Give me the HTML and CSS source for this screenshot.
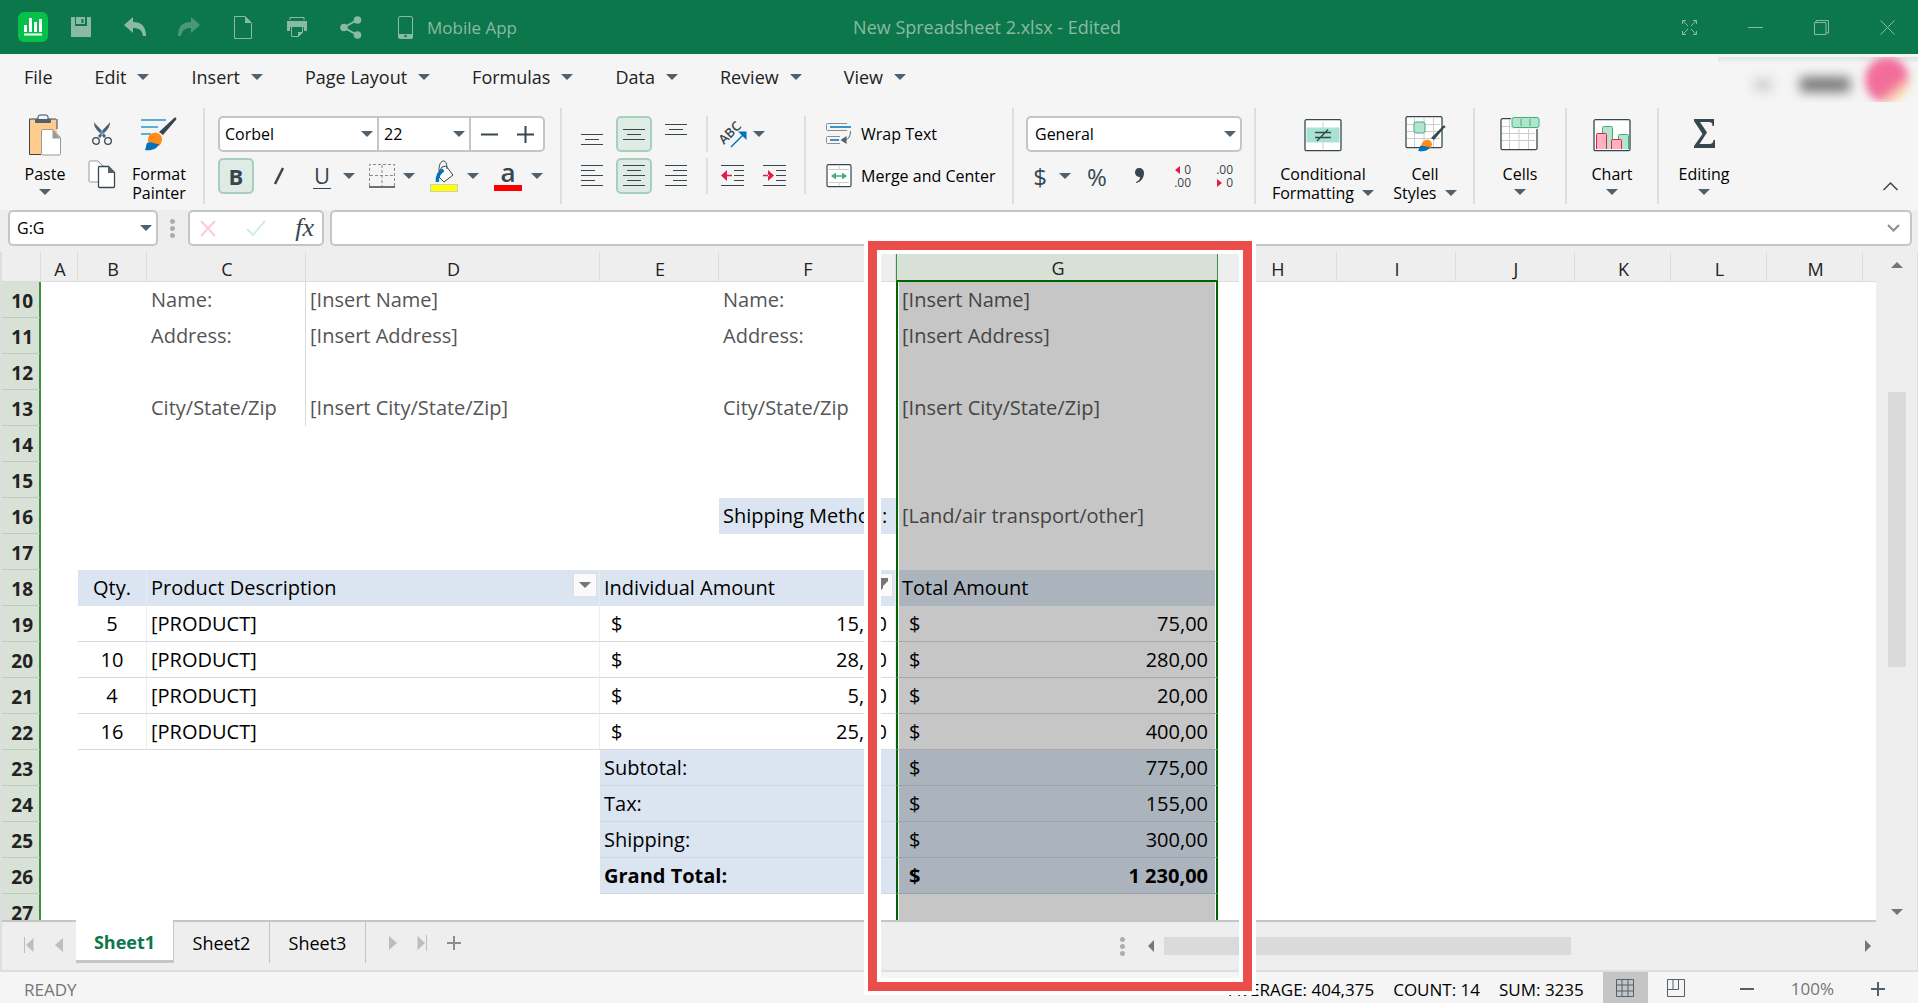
FILE: index.html
```html
<!DOCTYPE html>
<html lang="en">
<head>
    <meta charset="UTF-8">
    <meta name="viewport" content="width=device-width, initial-scale=1.0">
    <title>New Spreadsheet 2.xlsx - Edited</title>
    <link rel="stylesheet" href="styles.css">
</head>
<body>
    <header class="titlebar">
        <div class="quick">
            <svg class="logo" width="30" height="30" viewBox="0 0 30 30"><rect width="30" height="30" rx="6" fill="#05c04b"/><path d="M6 13h3v7H6zM11 6h3v14h-3zM16 10h3v10h-3zM21 7h3v13h-3zM6 21.500h18v2H6z" fill="#fff"/></svg>
            <button aria-label="Save"><svg width="20" height="20" viewBox="0 0 20 20"><path d="M0 0h4v9h12V0h4v20H0zM5 0h9v7H5zM10.500 2v4h2V2z" fill="currentColor" fill-rule="evenodd"/></svg></button>
            <button aria-label="Undo"><svg width="22" height="20" viewBox="0 0 22 20"><path d="M9 0v5c8 0 13 4 13 14h-3c-1-6-4-8-10-8v5L0 8z" fill="currentColor"/></svg></button>
            <button class="dim" aria-label="Redo"><svg width="22" height="20" viewBox="0 0 22 20"><path d="M13 0v5C5 5 0 9 0 19h3c1-6 4-8 10-8v5l9-8z" fill="currentColor"/></svg></button>
            <button aria-label="New"><svg width="18" height="23" viewBox="0 0 18 23"><path d="M.500.500H11l6.500 7v15H.500z" fill="none" stroke="currentColor"/><path d="M11 0v7h7z" fill="currentColor"/></svg></button>
            <button aria-label="Print"><svg width="20" height="20" viewBox="0 0 20 20"><path d="M3 3V.500h14V3" fill="none" stroke="currentColor"/><path d="M0 4h20v10h-3v-4H3v4H0z" fill="currentColor"/><path d="M4.500 9.500h11v6l-4 4h-7z" fill="none" stroke="currentColor"/><path d="M11 20v-5h5z" fill="currentColor"/></svg></button>
            <button aria-label="Share"><svg width="22" height="23" viewBox="0 0 22 23"><path d="M17 4 4 11.500 17 19" fill="none" stroke="currentColor" stroke-width="2"/><circle cx="17.500" cy="4" r="3.800" fill="currentColor"/><circle cx="4" cy="11.500" r="3.800" fill="currentColor"/><circle cx="17.500" cy="19" r="3.800" fill="currentColor"/></svg></button>
            <button class="mobile"><svg width="15" height="23" viewBox="0 0 15 23"><rect x=".5" y=".5" width="14" height="22" rx="1.500" fill="none" stroke="currentColor"/><path d="M0 18h15v4H0z" fill="currentColor"/><circle cx="7.500" cy="20" r="1.200" fill="#0c774b"/></svg>Mobile App</button>
        </div>
        <h1>New Spreadsheet 2.xlsx - Edited</h1>
        <div class="window-buttons">
            <button aria-label="Full screen"><svg width="15" height="15" viewBox="0 0 15 15"><path d="M.500 4V.500H4M.500.500 6 6M11 .500h3.500V4M14.500.500 9 6M.500 11v3.500H4M.500 14.500 6 9M11 14.500h3.500V11M14.500 14.500 9 9" fill="none" stroke="currentColor"/></svg></button>
            <button aria-label="Minimize"><svg width="15" height="15" viewBox="0 0 15 15"><path d="M0 7.500h15" stroke="currentColor"/></svg></button>
            <button aria-label="Restore"><svg width="15" height="15" viewBox="0 0 15 15"><path d="M.500 2.500h11.500v12H.500zM2 2V.500h12.500V13H12" fill="none" stroke="currentColor"/></svg></button>
            <button aria-label="Close"><svg width="15" height="15" viewBox="0 0 15 15"><path d="m.500.500 14 14m0-14-14 14" stroke="currentColor"/></svg></button>
        </div>
    </header>

    <nav class="menu">
        <button>File</button>
        <button>Edit <i class="caret"></i></button>
        <button>Insert <i class="caret"></i></button>
        <button>Page Layout <i class="caret"></i></button>
        <button>Formulas <i class="caret"></i></button>
        <button>Data <i class="caret"></i></button>
        <button>Review <i class="caret"></i></button>
        <button>View <i class="caret"></i></button>
        <div class="account"><span class="dot"></span><span class="user"></span><span class="avatar"></span></div>
    </nav>

    <section class="ribbon">
        <button class="big paste">
            <svg width="34" height="42" viewBox="0 0 34 42"><rect x="1" y="5" width="28" height="36" rx="1" fill="#ffcc8e"/><path d="M28 5H1.500v35.500H13" fill="none" stroke="#37474f"/><path d="M29 5v10" stroke="#37474f"/><rect x="10" y="1" width="10" height="6" rx="2" fill="#f5f5f5" stroke="#37474f"/><rect x="7" y="5" width="16" height="4" rx="1" fill="#50616d"/><path d="M15 15.500h10l7.500 8v16a1.500 1.500 0 0 1-1.500 1.500H15a1.500 1.500 0 0 1-1.500-1.500V17a1.500 1.500 0 0 1 1.500-1.500z" fill="#fff" stroke="#999"/><path d="M24.500 15.500v9h8z" fill="#999"/></svg>
            <span>Paste</span>
            <i class="caret"></i>
        </button>
        <div class="stack">
            <button aria-label="Cut"><svg width="20" height="25" viewBox="0 0 20 25"><path d="M2 1c0 5 2 7 5 10l5 6 2-2-4-5C7 6 3 3 2 1zM18 1c0 5-2 7-5 10l-5 6-2-2 4-5c3-4 7-7 8-9z" fill="#50616d"/><circle cx="10" cy="12" r="1.500" fill="#1e9ad6"/><circle cx="4" cy="20" r="3.300" fill="none" stroke="#37474f" stroke-width="1.300"/><circle cx="16" cy="20" r="3.300" fill="none" stroke="#37474f" stroke-width="1.300"/></svg></button>
            <button aria-label="Copy"><svg width="28" height="29" viewBox="0 0 28 29"><path d="M2 1h8l6 6v15H2a1 1 0 0 1-1-1V2a1 1 0 0 1 1-1z" fill="#fff" stroke="#999"/><path d="M9 1l7 6v-1z" fill="#999"/><path d="M11.500 6.500h9l6 6v14a1 1 0 0 1-1 1h-14a1 1 0 0 1-1-1v-19a1 1 0 0 1 1-1z" fill="#fff" stroke="#37474f" stroke-width="1.300"/><path d="M20 6.500V13h6.500z" fill="#50616d"/></svg></button>
        </div>
        <button class="big painter">
            <svg width="36" height="36" viewBox="0 0 36 36"><path d="M0 3h25M0 10h17M0 17h10" stroke="#1e9ad6" stroke-width="1.300"/><path d="M35 1c1 1 0 2-1 3L22 18l-4-3L32 2c1-1 2-2 3-1z" fill="#37474f"/><path d="M10 17c5-3 11 0 11 5 0 3-1 5-3 7L7 25c0-4 0-6 3-8z" fill="#ff8c1a"/><path d="M6 26c4-2 6 1 12 1-2 5-7 7-14 6 1-2 1-5 2-7z" fill="#0071bc"/></svg>
            <span>Format<br>Painter</span>
        </button>

        <div class="sep"></div>

        <div class="group font-group">
            <div class="font-box">
                <div class="combo family"><select aria-label="Font"><option>Corbel</option></select><i class="caret"></i></div>
                <div class="combo size"><select aria-label="Font size"><option>22</option></select><i class="caret"></i></div>
                <button aria-label="Decrease size"><svg width="17" height="17" viewBox="0 0 17 17"><path d="M0 8.500h17" stroke="currentColor" stroke-width="2"/></svg></button>
                <button aria-label="Increase size"><svg width="17" height="17" viewBox="0 0 17 17"><path d="M0 8.500h17M8.500 0v17" stroke="currentColor" stroke-width="2"/></svg></button>
            </div>
            <div class="row font-row">
                <button class="tool on bold" aria-label="Bold">B</button>
                <button class="tool" aria-label="Italic"><svg width="12" height="18" viewBox="0 0 12 18"><path d="M2 17 10 1" stroke="currentColor" stroke-width="2.500"/></svg></button>
                <button class="tool underline" aria-label="Underline"><span>U</span></button><i class="caret"></i>
                <button class="tool" aria-label="Borders"><svg width="26" height="24" viewBox="0 0 26 24"><path d="M.500 22V.500h25V22M13 1v21M1 11.500h24" fill="none" stroke="#8c8c8c" stroke-dasharray="3 2"/><path d="M0 23h26" stroke="#37474f" stroke-width="1.500"/></svg></button><i class="caret"></i>
                <button class="tool wide" aria-label="Fill color"><svg width="28" height="32" viewBox="0 0 28 32"><path d="M12 7 7 15l7 7 9-7-7-9z" fill="#fff" stroke="#37474f"/><path d="M9 11c0-7 2-10 4.500-10S17 4 17 9" fill="none" stroke="#37474f"/><path d="M7.500 22c-1-5 2-10 6-12" fill="none" stroke="#0071bc" stroke-width="3.500"/><rect x=".5" y="24.500" width="27" height="7" fill="#ff0" stroke="#ccc"/></svg></button><i class="caret"></i>
                <button class="tool wide text-color" aria-label="Font color"><span>a</span></button><i class="caret"></i>
            </div>
        </div>

        <div class="sep"></div>

        <div class="group">
            <div class="row">
                <button class="tool" aria-label="Bottom align"><svg width="22" height="22" viewBox="0 0 22 22"><path d="M0 11.500h22M4 16.500h14M0 21.500h22" stroke="currentColor"/></svg></button>
                <button class="tool on" aria-label="Middle align"><svg width="22" height="22" viewBox="0 0 22 22"><path d="M0 6.500h22M4 11.500h14M0 16.500h22" stroke="currentColor"/></svg></button>
                <button class="tool" aria-label="Top align"><svg width="22" height="22" viewBox="0 0 22 22"><path d="M0 1.500h22M4 6.500h14M0 11.500h22" stroke="currentColor"/></svg></button>
                <div class="short-sep"></div>
                <button class="tool" aria-label="Orientation"><svg width="32" height="30" viewBox="0 0 32 30"><text x="8" y="26" class="abc" transform="rotate(-45 8 26)">ABC</text><path d="M15 28 28 15" stroke="#0071bc" stroke-width="1.500"/><path d="M22 12.500h8.500V21z" fill="#0071bc"/></svg></button><i class="caret"></i>
            </div>
            <div class="row">
                <button class="tool" aria-label="Align left"><svg width="22" height="22" viewBox="0 0 22 22"><path d="M0 .500h22M0 5.500h14M0 10.500h22M0 15.500h14M0 20.500h22" stroke="currentColor"/></svg></button>
                <button class="tool on" aria-label="Center"><svg width="22" height="22" viewBox="0 0 22 22"><path d="M0 .500h22M4 5.500h14M0 10.500h22M4 15.500h14M0 20.500h22" stroke="currentColor"/></svg></button>
                <button class="tool" aria-label="Align right"><svg width="22" height="22" viewBox="0 0 22 22"><path d="M0 .500h22M8 5.500h14M0 10.500h22M8 15.500h14M0 20.500h22" stroke="currentColor"/></svg></button>
                <div class="short-sep"></div>
                <button class="tool" aria-label="Decrease indent"><svg width="23" height="22" viewBox="0 0 23 22"><path d="M0 .500h23M13 5.500h10M13 10.500h10M13 15.500h10M0 20.500h23" stroke="currentColor"/><path d="M0 10.500 6 5v11zM5 9.800h6v1.500H5z" fill="#e11d48"/></svg></button>
                <button class="tool" aria-label="Increase indent"><svg width="23" height="22" viewBox="0 0 23 22"><path d="M0 .500h23M13 5.500h10M13 10.500h10M13 15.500h10M0 20.500h23" stroke="currentColor"/><path d="M11 10.500 5 5v11zM0 9.800h6v1.500H0z" fill="#e11d48"/></svg></button>
            </div>
        </div>

        <div class="mid-sep"></div>

        <div class="group text-group">
            <button class="text-tool"><svg width="26" height="24" viewBox="0 0 26 24"><path d="M21 1.500H1.500a1 1 0 0 0-1 1v5a1 1 0 0 0 1 1H21M14 14.500H1.500a1 1 0 0 0-1 1v5a1 1 0 0 0 1 1H14" fill="none" stroke="#8c8c8c"/><path d="M4 5h21M4 18h9" stroke="#0071bc" stroke-width="1.300"/><path d="M24.500 9c0 5-2 8-5 9" fill="none" stroke="#50616d"/><path d="m14.500 18 6-4v8z" fill="#50616d"/></svg>Wrap Text</button>
            <button class="text-tool"><svg width="26" height="24" viewBox="0 0 26 24"><rect x="1" y=".7" width="24" height="22" rx="1.500" fill="#fff" stroke="#37474f" stroke-width="1.200"/><path d="M3 5.500h20M3 18.500h20M13 2v3M13 18v4" stroke="#ccc"/><path d="M7 12h12" stroke="#3cb07c" stroke-width="1.500"/><path d="m5 12 5-3.500v7zM21 12l-5-3.500v7z" fill="#3cb07c"/></svg>Merge and Center</button>
        </div>

        <div class="sep"></div>

        <div class="group number-group">
            <div class="combo number-format"><select aria-label="Number format"><option>General</option></select><i class="caret"></i></div>
            <div class="row number-row">
                <button class="dollar">$</button><i class="caret"></i>
                <button class="percent">%</button>
                <button aria-label="Comma style"><svg width="10" height="16" viewBox="0 0 10 16"><path d="M5 0c3 0 5 2 5 5 0 5-3 9-8 10v-1c3-1 4-3 4-5C3 9 1 7 1 4.500S2.500 0 5 0z" fill="#37474f"/></svg></button>
                <button class="decimals" aria-label="Increase decimals">
                    <span><i class="tri back"></i>0</span><span>.00</span>
                </button>
                <button class="decimals" aria-label="Decrease decimals">
                    <span>.00</span><span><i class="tri"></i>0</span>
                </button>
            </div>
        </div>

        <div class="sep"></div>

        <button class="big conditional">
            <svg width="38" height="42" viewBox="0 0 38 42"><rect x="1" y="5.700" width="36" height="31" rx="1.500" fill="#fff" stroke="#37474f" stroke-width="1.300"/><path d="M2.500 13.500h33v15h-33z" fill="#a9e2d0"/><path d="M19 8v6M19 29v6" stroke="#ccc"/><path d="M11 18.500h16M11 23.500h16M24 15.500 13 27" stroke="#37474f" stroke-width="1.300"/></svg>
            <span>Conditional<br>Formatting <i class="caret"></i></span>
        </button>
        <button class="big styles">
            <svg width="40" height="42" viewBox="0 0 40 42"><rect x="1" y="2.700" width="36" height="31" rx="1.500" fill="#fff" stroke="#37474f" stroke-width="1.300"/><path d="M2 10.500h33M2 17.500h33M2 24.500h33M9.500 4v29M19 4v29M28.500 4v29" stroke="#ccc"/><rect x="9" y="8" width="11" height="11" rx="2" fill="#b2e5cd" stroke="#3cb07c"/><path d="M40 12c1 1 0 2-1 2L29 26l-3-2L37 13c1-1 2-2 3-1z" fill="#37474f"/><path d="M17 29c2-4 9-5 10 1 0 2-1 3-2 5l-9-2z" fill="#ff8c1a"/><path d="M15 32c4-1 5 1 10 1-2 4-6 5-12 4 1-1 1-3 2-5z" fill="#0071bc"/></svg>
            <span>Cell<br>Styles <i class="caret"></i></span>
        </button>

        <div class="sep"></div>

        <button class="big">
            <svg width="40" height="42" viewBox="0 0 40 42"><rect x="1" y="4.700" width="36" height="31" rx="1.500" fill="#fff" stroke="#37474f" stroke-width="1.300"/><path d="M2 12.500h33M2 19.500h33M2 26.500h33M9.500 6v29M19 6v29M28.500 6v29" stroke="#ccc"/><path d="M11 3h28v12H11z" fill="#f5f5f5"/><rect x="12" y="3.500" width="27" height="10" rx="2" fill="#b2e5cd" stroke="#3cb07c"/><path d="M21 5v7M30 5v7" stroke="#3cb07c"/></svg>
            <span>Cells</span>
            <i class="caret"></i>
        </button>

        <div class="sep"></div>

        <button class="big">
            <svg width="38" height="42" viewBox="0 0 38 42"><rect x="1" y="5.700" width="36" height="31" rx="1.500" fill="#fff" stroke="#37474f" stroke-width="1.300"/><g fill="#b2e5cd" stroke="#3cb07c"><path d="M9.500 35V13.500a1 1 0 0 1 1-1h8a1 1 0 0 1 1 1V35M25.500 35V21.500a1 1 0 0 1 1-1h8a1 1 0 0 1 1 1V35"/></g><g fill="#ffb3c1" stroke="#e11d48"><path d="M3.500 35V20.500a1 1 0 0 1 1-1h8a1 1 0 0 1 1 1V35M18.500 35v-8.500a1 1 0 0 1 1-1h8a1 1 0 0 1 1 1V35"/></g></svg>
            <span>Chart</span>
            <i class="caret"></i>
        </button>

        <div class="sep"></div>

        <button class="big">
            <svg width="22" height="42" viewBox="0 0 22 42"><path d="M1 5h20v7h-1.500c0-3-1-4-4-4H7l7 10.500L6.500 30H16c3 0 4-1 4.500-4H22v8H1v-2l8.500-12L1 7z" fill="#37474f"/></svg>
            <span>Editing</span>
            <i class="caret"></i>
        </button>
        <button class="collapse" aria-label="Collapse ribbon"><svg width="15" height="9" viewBox="0 0 15 9"><path d="M.500 8 7.500 1l7 7" fill="none" stroke="#37474f" stroke-width="1.500"/></svg></button>
    </section>

    <section class="formula-bar">
        <div class="combo name-box"><select aria-label="Name box"><option>G:G</option></select><i class="caret"></i></div>
        <span class="grip"></span>
        <div class="fx-box">
            <button aria-label="Cancel"><svg width="16" height="15" viewBox="0 0 16 15"><path d="m1 0 14 15M15 0 1 15" stroke="#f9cfd3" stroke-width="2"/></svg></button>
            <button aria-label="Enter"><svg width="20" height="16" viewBox="0 0 20 16"><path d="m1 9 6 6L19 1" fill="none" stroke="#d5ece0" stroke-width="2"/></svg></button>
            <button class="fx" aria-label="Insert function">fx</button>
        </div>
        <div class="formula">
            <input type="text" aria-label="Formula">
            <button aria-label="Expand"><svg width="13" height="8" viewBox="0 0 13 8"><path d="m1 1 5.500 5.500L12 1" fill="none" stroke="#8c8c8c" stroke-width="2"/></svg></button>
        </div>
    </section>

    <main class="workspace">
        <div class="sheet">
            <table>
                <colgroup>
                    <col class="w-head"><col class="w-a"><col class="w-b"><col class="w-c"><col class="w-d"><col class="w-e"><col class="w-f"><col class="w-g"><col class="w-h"><col class="w-h"><col class="w-h"><col class="w-k"><col class="w-k"><col class="w-k"><col>
                </colgroup>
                <thead>
                    <tr><th></th><th>A</th><th>B</th><th>C</th><th>D</th><th>E</th><th>F</th><th class="sel">G</th><th>H</th><th>I</th><th>J</th><th>K</th><th>L</th><th>M</th><th class="last"></th></tr>
                </thead>
                <tbody>
                    <tr><th>10</th><td></td><td></td><td class="line">Name:</td><td>[Insert Name]</td><td></td><td>Name:</td><td class="sel">[Insert Name]</td></tr>
                    <tr><th>11</th><td></td><td></td><td class="line">Address:</td><td>[Insert Address]</td><td></td><td>Address:</td><td class="sel">[Insert Address]</td></tr>
                    <tr><th>12</th><td></td><td></td><td class="line"></td><td></td><td></td><td></td><td class="sel"></td></tr>
                    <tr><th>13</th><td></td><td></td><td class="line">City/State/Zip</td><td>[Insert City/State/Zip]</td><td></td><td>City/State/Zip</td><td class="sel">[Insert City/State/Zip]</td></tr>
                    <tr><th>14</th><td></td><td></td><td></td><td></td><td></td><td></td><td class="sel"></td></tr>
                    <tr><th>15</th><td></td><td></td><td></td><td></td><td></td><td></td><td class="sel"></td></tr>
                    <tr><th>16</th><td></td><td></td><td></td><td></td><td></td><td class="label">Shipping Method:</td><td class="sel">[Land/air transport/other]</td></tr>
                    <tr><th>17</th><td></td><td></td><td></td><td></td><td></td><td></td><td class="sel"></td></tr>
                    <tr class="heading">
                        <th>18</th><td></td><td class="qty">Qty.</td>
                        <td colspan="2"><div class="filter">Product Description <button aria-label="Filter"><i class="caret"></i></button></div></td>
                        <td colspan="2"><div class="filter">Individual Amount <button aria-label="Filter"><svg width="14" height="14" viewBox="0 0 14 14"><path d="M0 0h14v3L9 8v2l-4 4V8L0 3z" fill="#757575"/></svg></button></div></td>
                        <td class="sel">Total Amount</td>
                    </tr>
                    <tr class="item"><th>19</th><td></td><td class="qty">5</td><td colspan="2">[PRODUCT]</td><td colspan="2"><div class="money"><span>$</span><span>15,00</span></div></td><td class="sel"><div class="money"><span>$</span><span>75,00</span></div></td></tr>
                    <tr class="item"><th>20</th><td></td><td class="qty">10</td><td colspan="2">[PRODUCT]</td><td colspan="2"><div class="money"><span>$</span><span>28,00</span></div></td><td class="sel"><div class="money"><span>$</span><span>280,00</span></div></td></tr>
                    <tr class="item"><th>21</th><td></td><td class="qty">4</td><td colspan="2">[PRODUCT]</td><td colspan="2"><div class="money"><span>$</span><span>5,00</span></div></td><td class="sel"><div class="money"><span>$</span><span>20,00</span></div></td></tr>
                    <tr class="item"><th>22</th><td></td><td class="qty">16</td><td colspan="2">[PRODUCT]</td><td colspan="2"><div class="money"><span>$</span><span>25,00</span></div></td><td class="sel"><div class="money"><span>$</span><span>400,00</span></div></td></tr>
                    <tr class="total"><th>23</th><td></td><td></td><td colspan="2"></td><td class="label" colspan="2">Subtotal:</td><td class="sel"><div class="money"><span>$</span><span>775,00</span></div></td></tr>
                    <tr class="total"><th>24</th><td></td><td></td><td colspan="2"></td><td class="label" colspan="2">Tax:</td><td class="sel"><div class="money"><span>$</span><span>155,00</span></div></td></tr>
                    <tr class="total"><th>25</th><td></td><td></td><td colspan="2"></td><td class="label" colspan="2">Shipping:</td><td class="sel"><div class="money"><span>$</span><span>300,00</span></div></td></tr>
                    <tr class="total grand"><th>26</th><td></td><td></td><td colspan="2"></td><td class="label" colspan="2">Grand Total:</td><td class="sel"><div class="money"><span>$</span><span>1 230,00</span></div></td></tr>
                    <tr><th>27</th><td></td><td></td><td></td><td></td><td></td><td></td><td class="sel"></td></tr>
                </tbody>
            </table>
        </div>
        <div class="vscroll">
            <i class="arrow up"></i>
            <div class="track"><span class="thumb"></span></div>
            <i class="arrow down"></i>
        </div>
    </main>

    <div class="tabs">
        <div class="tab-nav">
            <button aria-label="First sheet"><svg width="10" height="16" viewBox="0 0 10 16"><path d="M.500 0v16" stroke="#bdbdbd"/><path d="M9.500 1v14L2 8z" fill="#bdbdbd"/></svg></button>
            <button aria-label="Previous sheet"><svg width="8" height="16" viewBox="0 0 8 16"><path d="M8 1v14L0 8z" fill="#bdbdbd"/></svg></button>
        </div>
        <button class="tab active">Sheet1</button>
        <button class="tab">Sheet2</button>
        <button class="tab">Sheet3</button>
        <div class="tab-nav next">
            <button aria-label="Next sheet"><svg width="8" height="16" viewBox="0 0 8 16"><path d="M0 1v14l8-7z" fill="#bdbdbd"/></svg></button>
            <button aria-label="Last sheet"><svg width="10" height="16" viewBox="0 0 10 16"><path d="M9.500 0v16" stroke="#bdbdbd"/><path d="M.500 1v14L8 8z" fill="#bdbdbd"/></svg></button>
            <button aria-label="Add sheet"><svg width="14" height="14" viewBox="0 0 14 14"><path d="M7 0v14M0 7h14" stroke="#8c8c8c" stroke-width="2"/></svg></button>
        </div>
        <div class="hscroll">
            <span class="grip"></span>
            <i class="arrow left"></i>
            <div class="track"><span class="thumb"></span></div>
            <i class="arrow right"></i>
        </div>
    </div>

    <footer class="status">
        <span class="ready">READY</span>
        <span>AVERAGE: 404,375</span>
        <span>COUNT: 14</span>
        <span>SUM: 3235</span>
        <button class="view on" aria-label="Normal view"><svg width="18" height="18" viewBox="0 0 18 18"><path d="M.500.500h17v17H.500zM.500 6h17M.500 12h17M6 .500v17M12 .500v17" fill="none" stroke="#50616d"/></svg></button>
        <button class="view" aria-label="Page layout view"><svg width="18" height="18" viewBox="0 0 18 18"><path d="M.500.500h17v17H.500zM.500 10.500h11v-10M6 .500v10" fill="none" stroke="#50616d"/></svg></button>
        <div class="zoom">
            <button aria-label="Zoom out"><svg width="14" height="14" viewBox="0 0 14 14"><path d="M0 7h14" stroke="#50616d" stroke-width="2"/></svg></button>
            <span>100%</span>
            <button aria-label="Zoom in"><svg width="14" height="14" viewBox="0 0 14 14"><path d="M0 7h14M7 0v14" stroke="#50616d" stroke-width="2"/></svg></button>
        </div>
    </footer>

    <div class="highlight"></div>
</body>
</html>
```
FILE: styles.css
```css
* {
    box-sizing: border-box;
}
body {
    margin: 0;
    height: 100vh;
    display: flex;
    flex-direction: column;
    position: relative;
    overflow: hidden;
    background-color: #eee;
    color: #000;
    font-family: "Open Sans", "Noto Sans", sans-serif;
    font-size: 16px;
}
button, select, input {
    font: inherit;
    color: inherit;
    background: none;
    border: 0;
    padding: 0;
    margin: 0;
}
button {
    display: flex;
    align-items: center;
    justify-content: center;
    cursor: pointer;
}
svg {
    display: block;
    flex: none;
    overflow: visible;
}
.caret {
    display: inline-block;
    flex: none;
    border: 6px solid transparent;
    border-top-color: #50616d;
    border-bottom: 0;
}

/* title bar */
.titlebar {
    height: 54px;
    flex: none;
    display: grid;
    grid-template-columns: 1fr auto 1fr;
    align-items: center;
    background-color: #0c774b;
    color: #8abaa4;
    font-size: 17px;
}
.titlebar h1 {
    margin: 0;
    padding-left: 56px;
    font-size: 18px;
    font-weight: normal;
}
.quick {
    display: flex;
    align-items: center;
    padding-left: 18px;
}
.quick .logo {
    margin-right: 6px;
}
.quick button {
    width: 54px;
}
.quick .dim {
    opacity: 0.5;
}
.quick .mobile {
    width: auto;
    gap: 14px;
    margin-left: 20px;
}
.window-buttons {
    display: flex;
    justify-content: flex-end;
    gap: 51px;
    padding-right: 23px;
}

/* menu */
.menu {
    height: 48px;
    flex: none;
    display: flex;
    align-items: center;
    gap: 42px;
    padding-left: 24px;
    background-color: #f5f5f5;
    color: #222;
    font-size: 18px;
}
.menu button {
    gap: 11px;
    padding-bottom: 2px;
}
.account {
    align-self: stretch;
    width: 200px;
    margin-left: auto;
    overflow: hidden;
    border-top: 3px solid #f5f5f5;
    background: linear-gradient(#d9e8e0, #f5f5f5 7px);
    display: flex;
    align-items: center;
}
.account .dot {
    width: 18px;
    height: 12px;
    margin: 10px 0 0 36px;
    background-color: #ccc;
    filter: blur(6px);
}
.account .user {
    width: 50px;
    height: 15px;
    margin: 10px 0 0 28px;
    background-color: #777;
    filter: blur(6px);
}
.account .avatar {
    width: 44px;
    height: 46px;
    margin-left: 15px;
    border-radius: 50%;
    background: linear-gradient(140deg, #f26d9b 60%, #fbe0b0 80%);
    filter: blur(4px);
}

/* ribbon */
.ribbon {
    height: 108px;
    flex: none;
    display: flex;
    align-items: flex-start;
    padding: 6px 20px 6px 19px;
    background-color: #f5f5f5;
}
.sep {
    width: 2px;
    height: 96px;
    flex: none;
    background-color: #dedede;
}
.mid-sep {
    width: 2px;
    height: 78px;
    margin: 8px 14px 0 12px;
    background-color: #dedede;
}
.short-sep {
    width: 2px;
    height: 36px;
    margin-left: 6px;
    background-color: #dedede;
}
.big {
    width: 90px;
    flex: none;
    flex-direction: column;
    padding-top: 6px;
    font-size: 16px;
    line-height: 19px;
}
.big > span {
    margin-top: 9px;
}
.big > .caret {
    margin-top: 5px;
}
.big span .caret {
    margin-left: 4px;
    vertical-align: 3px;
}
.paste {
    width: 52px;
}
.stack {
    width: 30px;
    margin: 13px 12px 0 16px;
    display: flex;
    flex-direction: column;
    align-items: center;
    gap: 14px;
}
.painter {
    width: 60px;
    padding-top: 9px;
    margin-right: 14px;
}
.painter > span {
    margin-top: 12px;
}
.conditional {
    width: 116px;
    margin: 0 10px 0 9px;
}
.styles {
    width: 68px;
    margin-right: 14px;
}
.group {
    display: flex;
    flex-direction: column;
    flex: none;
    gap: 6px;
    padding-top: 8px;
    margin-left: 12px;
}
.row {
    display: flex;
    align-items: center;
    gap: 6px;
    height: 36px;
    color: #37474f;
}
.row .tool + .caret {
    margin-left: -3px;
}
.tool {
    width: 36px;
    height: 36px;
    flex: none;
    border: 2px solid transparent;
    border-radius: 5px;
}
.tool.on {
    border-color: #a6d0bd;
    background-color: #dfece5;
}
.tool.wide {
    width: 40px;
}
.bold {
    font-weight: bold;
    font-size: 22px;
}
.abc {
    font-size: 13px;
    font-weight: 600;
    fill: #37474f;
}
.font-group {
    width: 327px;
    margin: 0 15px 0 13px;
}
.font-row {
    gap: 10px;
}
.font-row .tool {
    margin: 0 -2px 0 -1px;
}
.font-row .bold {
    margin-left: 0;
}
.font-row .tool + .caret {
    margin-left: -5px;
}
.underline span {
    width: 18px;
    font-size: 22px;
    line-height: 25px;
    border-bottom: 1px solid #37474f;
}
.text-color span {
    width: 28px;
    font-size: 26px;
    font-weight: 600;
    line-height: 22px;
    padding-bottom: 2px;
    border-bottom: 6px solid #f00;
}
.font-box, .combo, .fx-box, .formula {
    display: flex;
    align-items: center;
    height: 36px;
    background-color: #fff;
    border: 2px solid #c5c5c5;
    border-radius: 5px;
}
.combo {
    position: relative;
}
.combo select {
    appearance: none;
    width: 100%;
    height: 100%;
    padding-left: 7px;
    outline: 0;
}
.combo .caret {
    position: absolute;
    right: 4px;
    pointer-events: none;
}
.font-box {
    color: #37474f;
}
.font-box .combo {
    height: 100%;
    border-width: 0 2px 0 0;
    border-radius: 0;
    background: none;
    color: #000;
}
.font-box .combo select {
    padding-left: 5px;
}
.font-box .family {
    width: 159px;
}
.font-box .size {
    width: 92px;
}
.font-box > button {
    flex: 1;
}
.text-group {
    width: 186px;
    margin-left: 6px;
}
.text-tool {
    height: 36px;
    justify-content: flex-start;
    gap: 9px;
    white-space: nowrap;
}
.number-group {
    width: 216px;
    margin-right: 12px;
}
.number-row {
    gap: 0;
}
.number-row button {
    width: 42px;
    height: 36px;
    flex: none;
}
.number-row .dollar {
    width: 28px;
}
.dollar, .percent {
    font-size: 24px;
}
.number-row > .caret {
    margin: 0 5px;
}
.number-row .decimals {
    flex-direction: column;
    align-items: flex-end;
    padding-right: 11px;
    font-size: 12px;
    line-height: 13px;
}
.decimals span {
    display: flex;
    align-items: center;
    gap: 4px;
}
.tri {
    border: 4px solid transparent;
    border-left: 5px solid #e11d48;
    border-right: 0;
}
.tri.back {
    border-right: 5px solid #e11d48;
    border-left: 0;
}
.collapse {
    margin: 74px 0 0 auto;
}

/* formula bar */
.formula-bar {
    flex: none;
    display: flex;
    padding: 0 6px 6px 8px;
}
.name-box {
    width: 150px;
}
.grip {
    width: 5px;
    height: 20px;
    align-self: center;
    background: radial-gradient(circle, #adadad 2px, transparent 3px) 0 0 / 5px 7px;
}
.formula-bar .grip {
    margin: 0 13px 0 12px;
}
.fx-box {
    width: 136px;
    margin-right: 6px;
    padding: 0 8px 0 10px;
    justify-content: space-between;
}
.fx-box .fx {
    font-family: "Liberation Serif", serif;
    font-style: italic;
    font-size: 26px;
    line-height: 30px;
    color: #37474f;
}
.formula {
    flex: 1;
    padding-right: 10px;
}
.formula input {
    flex: 1;
    height: 100%;
    padding-left: 8px;
    outline: 0;
}

/* sheet */
.workspace {
    flex: 1;
    min-height: 0;
    display: flex;
    border-left: 2px solid #dedede;
    border-right: 1px solid #dedede;
}
.sheet {
    flex: 1;
    overflow: hidden;
    background-color: #fff;
    border-bottom: 2px solid #c5c5c5;
}
table {
    width: 100%;
    table-layout: fixed;
    border-collapse: separate;
    border-spacing: 0;
    font-size: 20px;
    color: #555;
}
.w-head { width: 39px; }
.w-a { width: 37px; }
.w-b { width: 69px; }
.w-c { width: 159px; }
.w-d { width: 294px; }
.w-e { width: 119px; }
.w-f { width: 177px; }
.w-g { width: 322px; }
.w-h { width: 119px; }
.w-k { width: 96px; }
th, td {
    height: 36px;
    padding: 0 0 0 4px;
    text-align: left;
    white-space: nowrap;
}
td {
    line-height: 30px;
}
thead th {
    height: 30px;
    padding: 4px 0 0 2px;
    text-align: center;
    font-size: 18px;
    font-weight: normal;
    line-height: 22px;
    color: #222;
    background-color: #eee;
    border-right: 1px solid #dcdcdc;
    border-bottom: 1px solid #dcdcdc;
}
thead .last {
    border-right: 0;
}
thead .sel {
    background-color: #d7e1d6;
    border-left: 1px solid #3f9142;
    border-right: 1px solid #3f9142;
    border-bottom: 2px solid #006400;
}
tbody th {
    padding: 2px 6px 0 0;
    text-align: right;
    font-size: 19px;
    line-height: 30px;
    color: #222;
    background-color: #d7e1d6;
    border-right: 2px solid #3f9142;
    border-bottom: 1px solid #bfc8be;
}
td.sel {
    background-color: #c6c6c6;
    border-left: 2px solid #006400;
    border-right: 2px solid #006400;
    box-shadow: inset 1px 0 #fff, inset -1px 0 #fff;
    color: #444;
}
.line {
    border-right: 1px solid #d9d9d9;
}
.label {
    background-color: #dbe5f1;
    color: #000;
}
.qty {
    padding: 0;
    text-align: center;
}
.heading td, .item td, .total td {
    color: #000;
}
.heading td:nth-child(n+3) {
    background-color: #dbe5f1;
    border-right: 1px solid #e6ecf3;
}
.heading td.sel:nth-child(n+3), .total td.sel {
    background-color: #abb3bc;
    border-right: 2px solid #006400;
}
.item td:nth-child(n+3) {
    border-bottom: 1px solid #d9d9d9;
    border-right: 1px solid #eee;
}
.item td.sel:nth-child(n+3) {
    border-bottom-color: #a8a8a8;
    border-right: 2px solid #006400;
}
.total .label {
    border-bottom: 1px solid #d0d9e3;
}
.total .sel {
    border-bottom: 1px solid #9ba3ab;
}
.grand td {
    font-weight: bold;
}
.money {
    display: flex;
    justify-content: space-between;
    padding: 0 8px 0 7px;
}
.filter {
    display: flex;
    align-items: center;
    justify-content: space-between;
}
.filter button {
    width: 24px;
    height: 24px;
    margin: 0 2px 6px 0;
    background-color: #fafafa;
    border: 1px solid #e5dcdc;
}
.filter .caret {
    border-top-color: #757575;
}

/* scroll bars */
.arrow {
    flex: none;
    border: 6px solid transparent;
}
.up {
    border-bottom-color: #757575;
    border-top: 0;
}
.down {
    border-top-color: #757575;
    border-bottom: 0;
}
.left {
    border-right-color: #757575;
    border-left: 0;
}
.right {
    border-left-color: #757575;
    border-right: 0;
}
.thumb {
    display: block;
    background-color: #dadada;
}
.vscroll {
    width: 41px;
    display: flex;
    flex-direction: column;
    align-items: center;
    padding: 10px 0 7px 0;
}
.vscroll .track {
    flex: 1;
    width: 18px;
    padding-top: 124px;
}
.vscroll .thumb {
    height: 43%;
    min-height: 275px;
}

/* tabs */
.tabs {
    height: 50px;
    flex: none;
    display: flex;
    align-items: flex-start;
    border-left: 2px solid #dedede;
    border-right: 1px solid #dedede;
    border-bottom: 2px solid #dedede;
}
.tab-nav {
    display: flex;
    gap: 21px;
    width: 74px;
    padding: 15px 0 0 22px;
}
.tab {
    width: 96px;
    height: 41px;
    border-right: 1px solid #c5c5c5;
    font-size: 18px;
}
.tab.active {
    width: 98px;
    margin-top: -2px;
    height: 43px;
    padding-top: 4px;
    background-color: #fff;
    border-bottom: 3px solid #c5c5c5;
    color: #0c774b;
    font-weight: bold;
}
.tab-nav.next {
    gap: 20px;
    width: 120px;
    padding: 13px 0 0 23px;
}
.hscroll {
    flex: 1;
    display: flex;
    align-items: center;
    margin-left: 634px;
    padding: 14px 46px 0 0;
}
.hscroll .arrow.left {
    margin: 0 10px 0 23px;
}
.hscroll .track {
    flex: 1;
    height: 18px;
}
.hscroll .thumb {
    width: 58%;
    height: 18px;
}

/* status bar */
.status {
    height: 31px;
    flex: none;
    display: flex;
    align-items: center;
    gap: 19px;
    background-color: #f5f5f5;
    font-size: 17px;
    line-height: 20px;
}
.status > span {
    padding-top: 4px;
}
.status .ready {
    padding-left: 24px;
    margin-right: auto;
    color: #757575;
}
.view {
    width: 45px;
    height: 31px;
}
.view.on {
    background-color: #c5c5c5;
}
.view + .view {
    margin-left: -13px;
}
.zoom {
    display: flex;
    align-items: center;
    gap: 37px;
    margin-left: 22px;
    padding: 2px 33px 0 0;
    color: #757575;
}

/* frame round the selected column */
.highlight {
    position: absolute;
    left: 868px;
    top: 241px;
    bottom: 12px;
    width: 384px;
    border: 9px solid #eb4d4a;
    box-shadow: 0 0 0 4px #fff, inset 0 0 0 4px #fff;
    pointer-events: none;
}
```
